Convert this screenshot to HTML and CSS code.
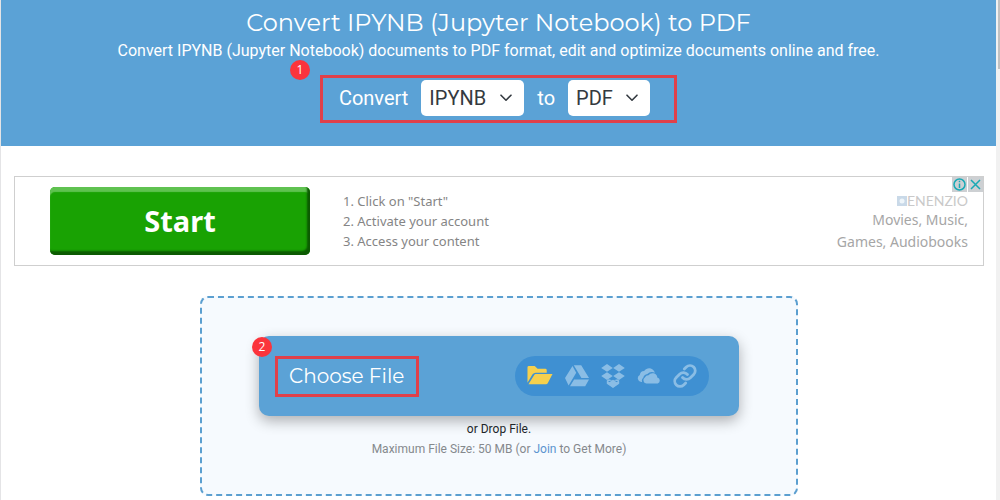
FILE: index.html
```html
<!DOCTYPE html>
<html lang="en">
<head>
<meta charset="utf-8">
<title>Convert IPYNB (Jupyter Notebook) to PDF</title>
<link rel="stylesheet" href="styles.css">
</head>
<body>
<div class="page">
  <header class="hero">
    <h1 class="hero-title">Convert IPYNB (Jupyter Notebook) to PDF</h1>
    <p class="hero-text">Convert IPYNB (Jupyter Notebook) documents to PDF format, edit and optimize documents online and free.</p>
    <form class="formats">
      <span class="step step-one">1</span>
      <label for="from">Convert</label>
      <span class="picker picker-from">
        <select id="from"><option>IPYNB</option></select>
        <svg class="caret" viewBox="0 0 12 8"><path d="M1 1.2 6 6.2 11 1.2"/></svg>
      </span>
      <label for="to">to</label>
      <span class="picker picker-to">
        <select id="to"><option>PDF</option></select>
        <svg class="caret" viewBox="0 0 12 8"><path d="M1 1.2 6 6.2 11 1.2"/></svg>
      </span>
    </form>
  </header>
  <main class="content">
    <aside class="ad">
      <button class="ad-start" type="button">Start</button>
      <ol class="ad-steps">
        <li>1. Click on "Start"</li>
        <li>2. Activate your account</li>
        <li>3. Access your content</li>
      </ol>
      <div class="ad-brand">
        <span class="brand"><svg class="brand-mark" viewBox="0 0 10 10"><path fill="#c9d9e8" d="M0 0h10v10H0z"/><circle cx="5" cy="5" r="2.5" fill="#eef5fa"/></svg>ENENZIO</span>
        <span>Movies, Music,</span>
        <span>Games, Audiobooks</span>
      </div>
      <div class="ad-controls">
        <button type="button" aria-label="Ad information"><svg viewBox="0 0 15 15"><circle cx="7.5" cy="7.5" r="5.5"/><path d="M7.5 6.500v4.500M7.500 3.800v1.500"/></svg></button>
        <button type="button" aria-label="Close ad"><svg viewBox="0 0 15 15"><path d="m3 3 9 9M12 3l-9 9"/></svg></button>
      </div>
    </aside>
    <section class="drop">
      <div class="chooser">
        <span class="step step-two">2</span>
        <button class="choose" type="button">Choose File</button>
        <div class="sources">
          <button class="source local" type="button" aria-label="Local file"><svg viewBox="0 0 27 24"><path d="M.5 3q0-1.500 1.500-1.500h6l3 3h8q1.500 0 1.500 1.500v2.500H9q-2 0-3.200 1.800L.5 19z"/><path d="M9 10h17.500l-5 9.500q-.6 1-1.800 1H1.500l6-9.500q.6-1 1.500-1z"/></svg></button>
          <button class="source" type="button" aria-label="Google Drive"><svg viewBox="0 0 24 24"><path d="M7.500 2 0 14l3.600 7.500 7.600-12.800zM8.800 1.300h7.400L24 14h-7.600zM9.100 15.400H24l-3.800 6.800H5z"/></svg></button>
          <button class="source" type="button" aria-label="Dropbox"><svg viewBox="0 0 24 24"><path d="m6 0 5.800 3.900L6 7.800.2 3.900zM18 0l5.800 3.900L18 7.800l-5.800-3.900zM6 8.200l5.800 3.900L6 16 .2 12.100zM18 8.200l5.800 3.900L18 16l-5.800-3.900zM12 16.400l4.200-1.200 2 1.400v3.100L12 24l-6.200-4.300v-3.100l2-1.400zM7 17.300l5 3.400 5-3.400-5-1z" fill-rule="evenodd"/><path d="m12 15.800 5.600 3.800L12 23.400l-5.600-3.800z"/></svg></button>
          <button class="source" type="button" aria-label="OneDrive"><svg viewBox="0 0 26 24"><path d="M5.500 18.500H4.500A4 4 0 0 1 3 11a5 5 0 0 1 4.800-4.500A6.500 6.500 0 0 1 18.800 7a6 6 0 0 1 .6 1.500 7 7 0 0 0-8.200 1.300 5.200 5.200 0 0 0-4.400 4 4.500 4.500 0 0 0-1.300 4.700z"/><path d="M10 20a3.500 3.500 0 0 1-1.500-6.400 4.300 4.300 0 0 1 4-2.300 5.200 5.200 0 0 1 9.500 2.200A3.400 3.400 0 0 1 22.500 20z"/></svg></button>
          <button class="source link" type="button" aria-label="Link"><svg viewBox="0 0 24 24"><path d="M9.500 13.500a5.400 5.400 0 0 0 7.900.3l3.300-3.300a5.200 5.200 0 0 0-7.400-7.400l-2 2"/><path d="M14.500 10.500a5.400 5.400 0 0 0-7.900-.3l-3.300 3.300a5.200 5.200 0 0 0 7.400 7.400l2-2"/></svg></button>
        </div>
      </div>
      <p class="hint">or Drop File.</p>
      <p class="hint limit">Maximum File Size: 50 MB (or <a href="#">Join</a> to Get More)</p>
    </section>
  </main>
</div>
<div class="scroll"><div class="thumb"></div></div>
</body>
</html>
```
FILE: styles.css
```css
* { box-sizing: border-box; }
body {
  margin: 0;
  display: flex;
  height: 100vh;
  overflow: hidden;
  background: #fff;
  font-family: Roboto, "Liberation Sans", sans-serif;
}
button, select { font: inherit; border: 0; margin: 0; padding: 0; }
h1, p, ol { margin: 0; padding: 0; font-weight: 400; }
svg { display: block; }

.page { flex: 1; min-width: 0; border-left: 1px solid #e4e4e6; }
.scroll { width: 4px; padding-left: 2px; background: #f1f1f1; }
.thumb { height: 69px; background: #c1c1c1; }

.hero {
  display: flex;
  flex-direction: column;
  align-items: center;
  padding: 8px 16px 23px;
  background: #5ba2d6;
  color: #fff;
  text-align: center;
}
.hero-title { font: 400 24px/30px Montserrat, Inter, sans-serif; }
.hero-text { font-size: 16px; line-height: 26px; }
.formats {
  position: relative;
  display: flex;
  align-items: center;
  margin-top: 11px;
  padding: 2px 24px 4px 16px;
  border: 3px solid #e0404a;
  font-size: 20px;
  line-height: 36px;
}
.picker { position: relative; margin-left: 13px; }
.picker + label { margin-left: 13px; }
.picker select {
  display: block;
  width: 100%;
  height: 36px;
  padding-left: 8px;
  border-radius: 5px;
  background: #fff;
  color: #343a40;
  appearance: none;
}
.picker-from { width: 103px; }
.picker-to { width: 82px; }
.caret {
  position: absolute;
  right: 12px;
  top: 14px;
  width: 12px;
  height: 8px;
  fill: none;
  stroke: #343a40;
  stroke-width: 1.6;
  stroke-linecap: round;
  stroke-linejoin: round;
  pointer-events: none;
}

.step {
  position: absolute;
  width: 20px;
  height: 20px;
  border-radius: 50%;
  background: #fb343c;
  color: #fff;
  font: 12px/20px "Open Sans", sans-serif;
  text-align: center;
}
.step-one { left: -33px; top: -18px; }
.step-two { left: -7px; top: 1px; }

.content { padding: 30px 12px 4px 13px; }
.ad {
  position: relative;
  display: flex;
  align-items: center;
  height: 90px;
  padding: 0 15px 0 35px;
  border: 1px solid #cfcfcf;
  font-family: "Noto Sans", sans-serif;
}
.ad-start {
  width: 260px;
  height: 68px;
  padding-bottom: 2px;
  border-radius: 5px;
  background: #19a203;
  box-shadow: inset -3px -4px 2px #0c5a02, inset 0 5px 1px #5fc250;
  color: #fff;
  font-weight: 700;
  font-size: 29px;
}
.ad-steps {
  margin-left: 33px;
  list-style: none;
  color: #858585;
  font-size: 13px;
  line-height: 20px;
}
.ad-brand {
  display: flex;
  flex-direction: column;
  align-items: flex-end;
  margin-left: auto;
  padding-top: 4px;
  color: #a6a6a6;
  font-size: 14px;
  line-height: 22px;
}
.brand {
  display: flex;
  align-items: center;
  color: #c9c9c9;
  font: 14px/16px Lato, sans-serif;
}
.brand-mark { width: 10px; height: 10px; }
.ad-controls {
  position: absolute;
  top: 0;
  right: 0;
  display: flex;
  gap: 1px;
}
.ad-controls button { width: 15px; height: 15px; background: #cdd0d3; }
.ad-controls svg { width: 15px; height: 15px; fill: none; stroke: #18a9b5; stroke-width: 1.5; }

.drop {
  max-width: 598px;
  height: 200px;
  margin: 30px auto 0;
  padding: 38px 57px 0;
  border: 2px dashed #5b9fd0;
  border-radius: 8px;
  background: #f6fafe;
}
.chooser {
  position: relative;
  display: flex;
  align-items: center;
  justify-content: space-between;
  height: 80px;
  padding: 0 30px 0 16px;
  border-radius: 10px;
  background: #5ba2d6;
  box-shadow: 0 5px 14px rgba(0, 0, 0, .3);
}
.choose {
  padding: 0 12px 0 11px;
  border: 3px solid #e0404a;
  background: none;
  color: #fff;
  font: 400 20px/35px Montserrat, Inter, sans-serif;
}
.sources {
  display: flex;
  align-items: center;
  gap: 12px;
  height: 40px;
  padding: 0 12px;
  border-radius: 20px;
  background: #3f90d2;
}
.source { width: 24px; height: 24px; background: none; }
.source svg { width: 100%; height: 24px; fill: #8abde5; }
.local { width: 26px; }
.local svg { fill: #f6d04d; }
.link svg { fill: none; stroke: #8abde5; stroke-width: 2.8; stroke-linecap: round; }
.hint {
  position: relative;
  color: #212529;
  font-size: 12px;
  line-height: 20px;
  text-align: center;
}
.chooser + .hint { margin-top: 3px; }
.limit { color: #85898d; }
.limit a { color: #5b94cf; text-decoration: none; }
```
